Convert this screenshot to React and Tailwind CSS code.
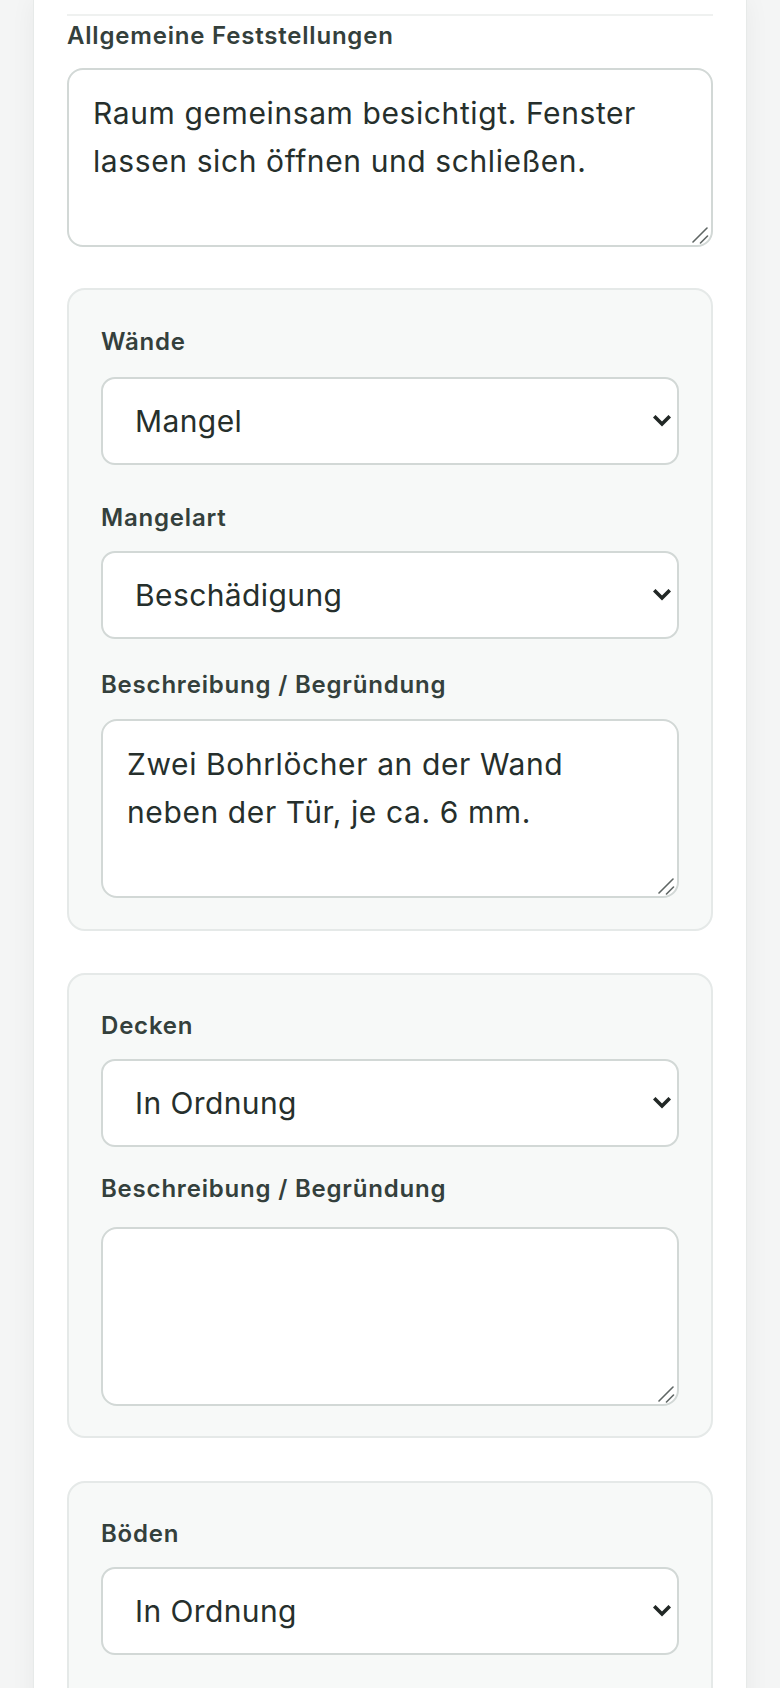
import React from "react";

const font = { fontFamily: '"Inter", "Noto Sans", sans-serif' };

function Label({ children, className = "" }) {
  return (
    <div className={"text-[24px] leading-[32px] font-semibold tracking-[0.8px] text-[#34403c] " + className}>
      {children}
    </div>
  );
}

function Chevron() {
  return (
    <svg
      className="pointer-events-none absolute right-[8px] top-1/2 -translate-y-1/2"
      width="18"
      height="12"
      viewBox="0 0 18 12"
      fill="none"
    >
      <polyline points="2.5,2.5 9,9 15.5,2.5" stroke="#222826" strokeWidth="3.6" strokeLinecap="square" />
    </svg>
  );
}

function Grip() {
  return (
    <svg
      className="pointer-events-none absolute right-[4px] bottom-[3px]"
      width="17"
      height="17"
      viewBox="0 0 17 17"
      fill="none"
    >
      <line x1="1" y1="15" x2="15" y2="1" stroke="#5f6664" strokeWidth="1.6" strokeLinecap="round" />
      <line x1="8.5" y1="16" x2="15.5" y2="9" stroke="#5f6664" strokeWidth="1.6" strokeLinecap="round" />
    </svg>
  );
}

function Select({ value, options, className = "" }) {
  return (
    <div className={"relative " + className}>
      <select
        defaultValue={value}
        style={font}
        className="block h-[88px] w-full appearance-none rounded-[14px] border-2 border-[#d2d8d6] bg-white pl-[32px] pr-[40px] text-[30px] tracking-[0.4px] text-[#262f2c] outline-none"
      >
        {options.map((o) => (
          <option key={o}>{o}</option>
        ))}
      </select>
      <Chevron />
    </div>
  );
}

function Area({ value, className = "" }) {
  return (
    <div className={"relative " + className}>
      <textarea
        defaultValue={value}
        rows={3}
        style={font}
        className="block h-[179px] w-full resize-none rounded-[16px] border-2 border-[#d2d8d6] bg-white px-[24px] pt-[19px] pb-[13px] text-[30px] leading-[48px] tracking-[0.6px] text-[#262f2c] outline-none"
      />
      <Grip />
    </div>
  );
}

const zustand = ["In Ordnung", "Mangel", "Nicht geprüft"];
const arten = ["Beschädigung", "Verschmutzung", "Abnutzung"];

export default function App() {
  return (
    <div style={font} className="min-h-screen bg-[#f4f5f5] px-[33px]">
      <div className="min-h-[1688px] border-x border-[#e7eae9] bg-white px-[33px] pt-[14px] shadow-[0_0_24px_rgba(0,0,0,0.05)]">
        <div className="h-[2px] bg-[#eff1f0]" />
        <Label className="mt-[4px]">Allgemeine Feststellungen</Label>
        <Area className="mt-[16px]" value="Raum gemeinsam besichtigt. Fenster lassen sich öffnen und schließen." />

        <div className="mt-[41px] rounded-[18px] border-2 border-[#e5e9e8] bg-[#f7f9f8] px-[32px] pt-[36px] pb-[31px]">
          <Label>Wände</Label>
          <Select className="mt-[19px]" value="Mangel" options={zustand} />
          <Label className="mt-[37px]">Mangelart</Label>
          <Select className="mt-[17px]" value="Beschädigung" options={arten} />
          <Label className="mt-[30px]">Beschreibung / Begründung</Label>
          <Area className="mt-[18px]" value="Zwei Bohrlöcher an der Wand neben der Tür, je ca. 6 mm." />
        </div>

        <div className="mt-[42px] rounded-[18px] border-2 border-[#e5e9e8] bg-[#f7f9f8] px-[32px] pt-[35px] pb-[30px]">
          <Label>Decken</Label>
          <Select className="mt-[17px]" value="In Ordnung" options={zustand} />
          <Label className="mt-[26px]">Beschreibung / Begründung</Label>
          <Area className="mt-[22px]" value="" />
        </div>

        <div className="mt-[43px] rounded-[18px] border-2 border-[#e5e9e8] bg-[#f7f9f8] px-[32px] pt-[35px] pb-[32px]">
          <Label>Böden</Label>
          <Select className="mt-[17px]" value="In Ordnung" options={zustand} />
          <Label className="mt-[31px]">Beschreibung / Begründung</Label>
          <Area className="mt-[22px]" value="" />
        </div>
      </div>
    </div>
  );
}
